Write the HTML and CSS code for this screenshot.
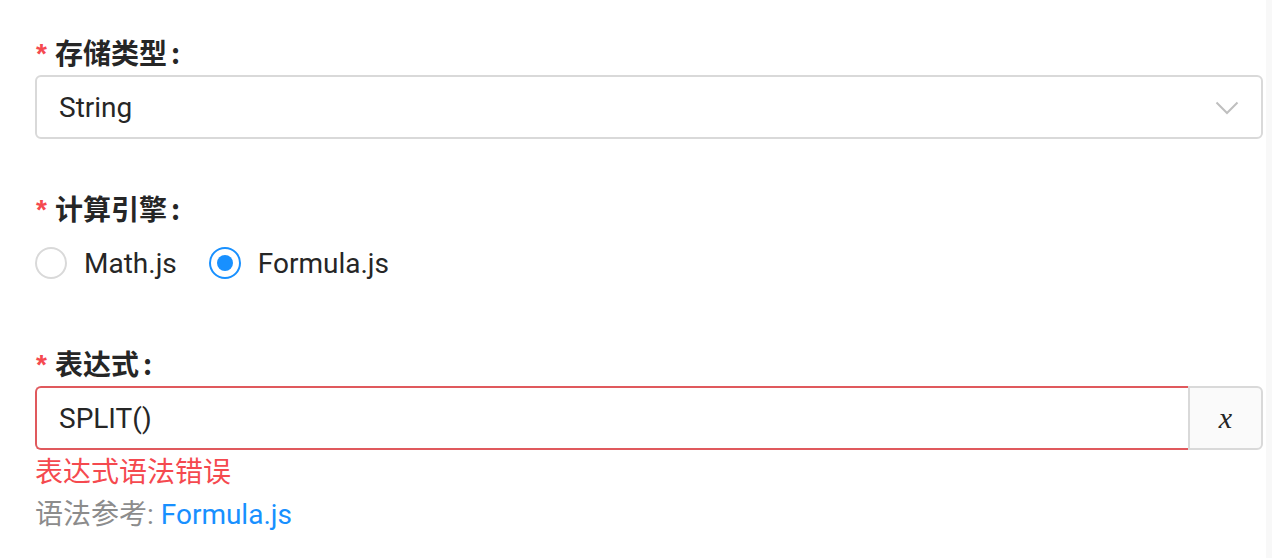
FILE: index.html
```html
<!DOCTYPE html>
<html lang="zh-CN">
<head>
<meta charset="utf-8">
<title>表单</title>
<link rel="stylesheet" href="styles.css">
</head>
<body>
<div class="page">
  <form class="form">
    <div class="item item-type">
      <div class="label"><span class="req">*</span>存储类型<span class="colon">:</span></div>
      <div class="select">
        <span class="select-value">String</span>
        <svg class="arrow" width="24" height="14" viewBox="0 0 24 14"><path d="M1.5 1.5 L12 12 L22.5 1.5" fill="none" stroke="#bfbfbf" stroke-width="2"/></svg>
      </div>
    </div>
    <div class="item item-engine">
      <div class="label"><span class="req">*</span>计算引擎<span class="colon">:</span></div>
      <div class="radios">
        <label class="radio"><span class="dot"></span><span class="radio-text">Math.js</span></label>
        <label class="radio checked"><span class="dot"></span><span class="radio-text">Formula.js</span></label>
      </div>
    </div>
    <div class="item item-expr">
      <div class="label"><span class="req">*</span>表达式<span class="colon">:</span></div>
      <div class="group">
        <div class="input error">SPLIT()</div>
        <div class="addon">x</div>
      </div>
      <div class="explain">表达式语法错误</div>
      <div class="extra">语法参考: <a class="link">Formula.js</a></div>
    </div>
  </form>
  <div class="gutter"></div>
</div>
</body>
</html>
```

FILE: styles.css
```css
html, body {
  margin: 0;
  padding: 0;
  background: #fff;
}
body {
  font-family: Roboto, "Noto Sans CJK SC", sans-serif;
  color: rgba(0, 0, 0, 0.85);
}
.page {
  display: flex;
  height: 558px;
}
.form {
  flex: 1;
  padding: 30px 3px 0 35px;
  box-sizing: border-box;
}
.gutter {
  width: 6px;
  background: #f8f8f8;
}
.item-engine {
  margin-top: 47px;
}
.item-expr {
  margin-top: 46px;
}
.label {
  height: 44px;
  line-height: 44px;
  font-size: 28px;
  font-weight: 700;
  font-family: "Noto Sans CJK SC", sans-serif;
  color: #262626;
  margin-bottom: 1px;
  display: flex;
  align-items: center;
}
.req {
  color: #f5494f;
  font-family: "Liberation Sans", sans-serif;
  font-weight: 700;
  font-size: 28px;
  margin-right: 8px;
  margin-left: 1px;
  position: relative;
  top: 2px;
}
.colon {
  margin-left: 4px;
}
.select {
  height: 64px;
  box-sizing: border-box;
  border: 2px solid #d9d9d9;
  border-radius: 6px;
  display: flex;
  align-items: center;
  justify-content: space-between;
  padding: 0 22px 0 22px;
  font-size: 28px;
  color: #262626;
}
.arrow {
  display: block;
  margin-top: 2px;
}
.radios {
  height: 64px;
  display: flex;
  align-items: center;
  font-size: 28px;
  color: #262626;
}
.radio {
  display: flex;
  align-items: center;
  margin-right: 32px;
}
.dot {
  width: 32px;
  height: 32px;
  box-sizing: border-box;
  border: 2px solid #d9d9d9;
  border-radius: 50%;
  display: flex;
  align-items: center;
  justify-content: center;
}
.radio.checked .dot {
  border-color: #1890ff;
}
.radio.checked .dot::after {
  content: "";
  width: 16px;
  height: 16px;
  border-radius: 50%;
  background: #1890ff;
}
.radio-text {
  margin-left: 17px;
}
.group {
  display: flex;
  height: 64px;
  margin-top: 0;
}
.input {
  flex: 1;
  box-sizing: border-box;
  border: 2px solid #e0595d;
  border-right: 0;
  border-radius: 6px 0 0 6px;
  display: flex;
  align-items: center;
  padding-left: 22px;
  font-size: 28px;
  color: #262626;
}
.addon {
  width: 75px;
  box-sizing: border-box;
  border: 2px solid #d9d9d9;
  border-radius: 0 6px 6px 0;
  background: #fafafa;
  display: flex;
  align-items: center;
  justify-content: center;
  font-family: "Liberation Serif", serif;
  font-style: italic;
  font-size: 30px;
  color: #262626;
}
.explain {
  height: 40px;
  line-height: 40px;
  font-size: 28px;
  color: #f5494f;
  font-family: "Noto Sans CJK SC", sans-serif;
}
.extra {
  height: 50px;
  line-height: 50px;
  font-size: 28px;
  color: #8c8c8c;
  font-family: Roboto, "Noto Sans CJK SC", sans-serif;
}
.link {
  color: #1890ff;
  text-decoration: none;
}
```
